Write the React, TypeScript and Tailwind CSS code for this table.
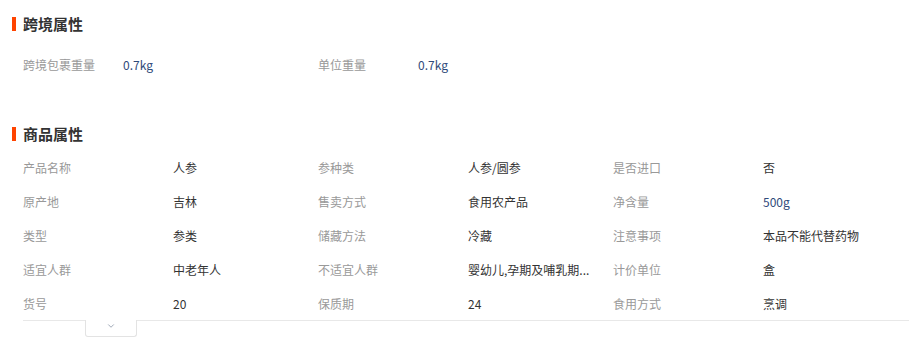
import { ChevronDown } from "lucide-react";

type Attr = { label: string; value: string; num?: boolean };

const crossBorder: Attr[] = [
  { label: "跨境包裹重量", value: "0.7kg", num: true },
  { label: "单位重量", value: "0.7kg", num: true },
];

const goods: Attr[] = [
  { label: "产品名称", value: "人参" },
  { label: "参种类", value: "人参/圆参" },
  { label: "是否进口", value: "否" },
  { label: "原产地", value: "吉林" },
  { label: "售卖方式", value: "食用农产品" },
  { label: "净含量", value: "500g", num: true },
  { label: "类型", value: "参类" },
  { label: "储藏方法", value: "冷藏" },
  { label: "注意事项", value: "本品不能代替药物" },
  { label: "适宜人群", value: "中老年人" },
  { label: "不适宜人群", value: "婴幼儿,孕期及哺乳期..." },
  { label: "计价单位", value: "盒" },
  { label: "货号", value: "20" },
  { label: "保质期", value: "24" },
  { label: "食用方式", value: "烹调" },
];

function Heading({ title }: { title: string }) {
  return (
    <div className="flex h-5 items-center">
      <span className="ml-[12px] h-[14px] w-[4px] bg-[#ff4400]" />
      <span className="ml-[7px] text-[15px] font-bold leading-5 text-[#333]">{title}</span>
    </div>
  );
}

export default function App() {
  return (
    <div
      className="h-[354px] w-[909px] overflow-hidden bg-white pt-[14px]"
      style={{ fontFamily: '"Noto Sans CJK SC", "Noto Sans", sans-serif' }}
    >
      {/* 跨境属性 */}
      <Heading title="跨境属性" />
      <div className="mt-[14px] flex h-[34px] items-center pl-[23px] text-xs">
        {crossBorder.map(a => (
          <div key={a.label} className="flex w-[295px] items-center">
            <span className="w-[100px] text-[#999]">{a.label}</span>
            <span className="text-[#2f4a7a]">{a.value}</span>
          </div>
        ))}
      </div>

      {/* 商品属性 */}
      <div className="mt-[42px]">
        <Heading title="商品属性" />
      </div>
      <div className="mt-[7px] pl-[23px]">
        <div className="grid grid-cols-[295px_295px_295px] text-xs">
          {goods.map(a => (
            <div key={a.label} className="flex h-[34px] items-center">
              <span className="w-[150px] text-[#999]">{a.label}</span>
              <span className={`whitespace-nowrap ${a.num ? "text-[#2f4a7a]" : "text-[#333]"}`}>{a.value}</span>
            </div>
          ))}
        </div>
        <div className="-mt-px border-t border-[#e8e8e8]">
          <button className="ml-[62px] -mt-px flex h-[17px] w-[52px] items-start justify-center rounded-b-[3px] border border-t-0 border-[#e3e3e3] bg-white">
            <ChevronDown size={10} strokeWidth={2} className="mt-[1px] text-[#8d97a8]" />
          </button>
        </div>
      </div>
    </div>
  );
}
